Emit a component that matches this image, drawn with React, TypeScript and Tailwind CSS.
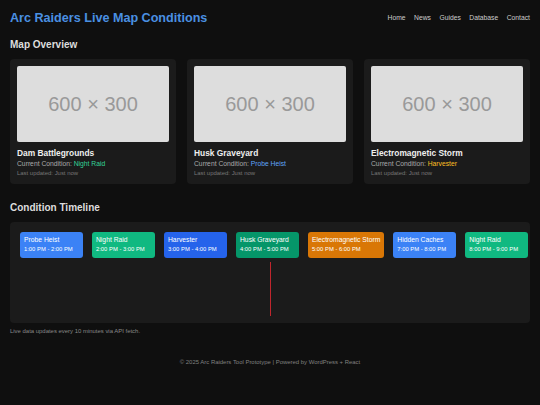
const maps = [
  { name: "Dam Battlegrounds", condition: "Night Raid", tone: "text-[#34d399]" },
  { name: "Husk Graveyard", condition: "Probe Heist", tone: "text-[#60a5fa]" },
  { name: "Electromagnetic Storm", condition: "Harvester", tone: "text-[#fbbf24]" },
];

const timeline = [
  { label: "Probe Heist", time: "1:00 PM - 2:00 PM", bg: "bg-[#3b82f6]" },
  { label: "Night Raid", time: "2:00 PM - 3:00 PM", bg: "bg-[#10b981]" },
  { label: "Harvester", time: "3:00 PM - 4:00 PM", bg: "bg-[#2563eb]" },
  { label: "Husk Graveyard", time: "4:00 PM - 5:00 PM", bg: "bg-[#059669]" },
  { label: "Electromagnetic Storm", time: "5:00 PM - 6:00 PM", bg: "bg-[#d97706]" },
  { label: "Hidden Caches", time: "7:00 PM - 8:00 PM", bg: "bg-[#3b82f6]" },
  { label: "Night Raid", time: "8:00 PM - 9:00 PM", bg: "bg-[#10b981]" },
];

const navLinks = ["Home", "News", "Guides", "Database", "Contact"];

function MapCard({ name, condition, tone }: { name: string; condition: string; tone: string }) {
  return (
    <div className="bg-[#1b1b1b] rounded-[4px] p-[7px] pb-[6px]">
      <div className="h-[76px] bg-[#dddddd] rounded-[2px] flex items-center justify-center text-[#999999] text-[20px] leading-none">
        600 × 300
      </div>
      <h3 className="mt-[6px] text-[8.4px] leading-[10px] font-bold text-[#eeeeee]">{name}</h3>
      <p className="mt-[1px] text-[6.75px] leading-[10px] text-[#aaaaaa]">
        Current Condition: <span className={tone}>{condition}</span>
      </p>
      <p className="text-[5.95px] leading-[9px] text-[#777777]">Last updated: Just now</p>
    </div>
  );
}

export default function App() {
  return (
    <div className="min-h-[405px] bg-[#0f0f0f] font-['Liberation_Sans',Arial,sans-serif] px-[10px]">
      <header className="flex items-center justify-between h-[36px]">
        <h1 className="text-[12.6px] font-bold text-[#4a90e2] leading-none">Arc Raiders Live Map Conditions</h1>
        <nav className="flex gap-[8.5px] text-[6.75px] text-[#cccccc]">
          {navLinks.map((link) => (
            <a key={link}>{link}</a>
          ))}
        </nav>
      </header>

      <section>
        <h2 className="mt-[3px] text-[10px] leading-[12px] font-bold text-[#dddddd]">Map Overview</h2>
        <div className="mt-[8px] grid grid-cols-3 gap-[11px]">
          {maps.map((m) => (
            <MapCard key={m.name} {...m} />
          ))}
        </div>
      </section>

      <section className="mt-[18px]">
        <h2 className="text-[10px] leading-[12px] font-bold text-[#dddddd]">Condition Timeline</h2>
        <div className="relative mt-[8px] h-[101px] bg-[#1b1b1b] rounded-[4px] p-[10px] overflow-hidden">
          <div className="flex gap-[9px]">
            {timeline.map((t, i) => (
              <div
                key={i}
                className={`${t.bg} shrink-0 min-w-[63px] h-[26px] rounded-[3px] px-[4px] pt-[3px] text-white whitespace-nowrap`}
              >
                <div className="text-[6.75px] leading-[9px]">{t.label}</div>
                <div className="text-[5.85px] leading-[10px]">{t.time}</div>
              </div>
            ))}
          </div>
          {/* current time marker */}
          <div className="absolute left-[260px] top-[40px] h-[54px] w-px bg-[#c0262d]" />
        </div>
        <p className="mt-[4px] text-[5.95px] text-[#888888]">Live data updates every 10 minutes via API fetch.</p>
      </section>

      <footer className="mt-[22px] text-center text-[5.95px] text-[#808080]">
        © 2025 Arc Raiders Tool Prototype | Powered by WordPress + React
      </footer>
    </div>
  );
}
